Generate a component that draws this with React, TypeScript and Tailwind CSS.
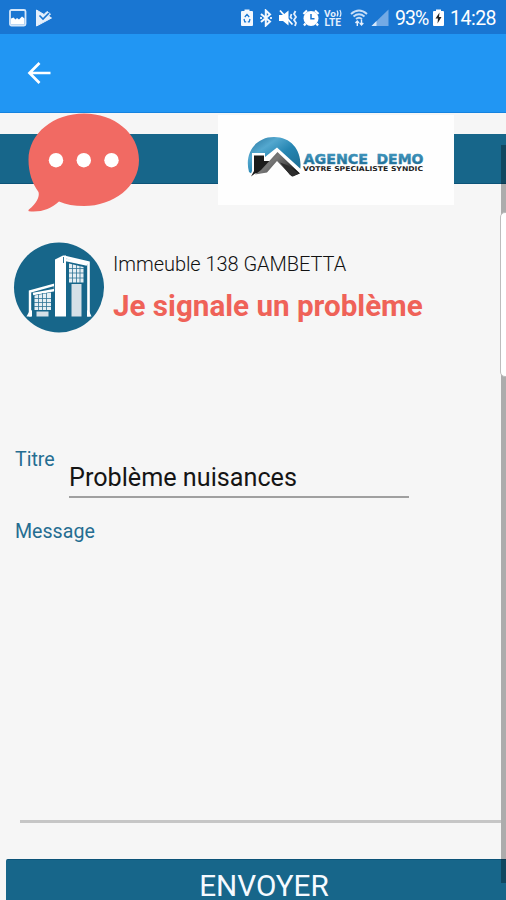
import { useState } from 'react';

const StatusBar = () => (
  <div className="flex h-[34px] shrink-0 items-center bg-[#1976d2] pl-[9px] pt-[2px] text-white">
    {/* Notifications */}
    <svg width="18" height="18" viewBox="0 0 18 18">
      <rect x="1" y="1" width="15.5" height="15.5" rx="1.5" fill="none" stroke="#d5e7fa" strokeWidth="1.8" />
      <path d="M2 9.5 L4.5 8.5 L6.5 10.5 L8 9 L10 10.5 L13 7.5 L15.5 9.5 V15.5 H2 Z" fill="#fff" />
    </svg>
    <svg className="ml-[8px]" width="18" height="18" viewBox="0 0 18 18">
      <path d="M1.5 1 L9 5.5 L12 2.5 L15.5 5 L13.5 7 L16.5 9 L1.5 17 Z" fill="#e4effc" stroke="#e4effc" strokeLinejoin="round" />
      <path d="M4.5 6.5 L8 10 L14 4" fill="none" stroke="#1976d2" strokeWidth="1.6" />
    </svg>

    {/* System icons */}
    <div className="ml-auto flex items-center pr-[9px]">
      <svg width="14" height="18" viewBox="0 0 14 18">
        <path d="M4.5 0.5 H9.5 V2 H12 Q13 2 13 3 V16 Q13 17 12 17 H2 Q1 17 1 16 V3 Q1 2 2 2 H4.5 Z" fill="#f3f8fe" />
        <path d="M4.8 8 L7 5.4 L9.2 8 M4 10 L4.8 12.8 H6.2 M10 10 L9.2 12.8 H7.8" fill="none" stroke="#1976d2" strokeWidth="1.3" />
      </svg>
      <svg className="ml-[5px]" width="14" height="18" viewBox="0 0 14 18">
        <path d="M2 5 L11 12.5 L6.8 16.5 V1.5 L11 5.5 L2 13" fill="none" stroke="#f3f8fe" strokeWidth="2" />
        <path d="M1 9 H3 M11 9 H13" stroke="#d5e7fa" strokeWidth="1.8" />
      </svg>
      <svg className="ml-[5px]" width="20" height="18" viewBox="0 0 20 18">
        <path d="M1 6 H5 L10.5 1.5 V16.5 L5 12 H1 Z" fill="#fff" />
        <path d="M2 1.5 L14.5 15.5" stroke="#fff" strokeWidth="1.8" />
        <path d="M13.5 5 L12.5 8 L14 10 M17.5 2 L16 5 L18 8 L16 11 L18 14 L17 17" fill="none" stroke="#e4effc" strokeWidth="1.8" />
      </svg>
      <svg className="ml-[4px]" width="18" height="18" viewBox="0 0 18 18">
        <circle cx="9" cy="9.5" r="7.5" fill="#fff" />
        <path d="M1.5 5 L5 1.5 M16.5 5 L13 1.5 M3.5 14.5 L2 16.5 M14.5 14.5 L16 16.5" stroke="#fff" strokeWidth="2.2" />
        <path d="M9 5 V9.7 H12.5" fill="none" stroke="#1976d2" strokeWidth="1.5" />
      </svg>
      <svg className="ml-[4px] overflow-visible" width="19" height="18" viewBox="0 0 19 18" fill="#e4effc" fontFamily="Roboto, sans-serif" fontWeight="700">
        <text x="0" y="7.5" fontSize="9" textLength="12" lengthAdjust="spacingAndGlyphs">Vo</text>
        <path d="M13 1.5 Q15 4.5 13 7.5 M15.8 1 Q18 4.5 15.8 8" fill="none" stroke="#e4effc" strokeWidth="1.2" />
        <text x="0.5" y="17" fontSize="10" textLength="16.5" lengthAdjust="spacingAndGlyphs">LTE</text>
      </svg>
      <svg className="ml-[7px]" width="18" height="18" viewBox="0 0 18 18">
        <path d="M1 5 Q9 -2 17 5 M3.5 7.5 Q9 3 14.5 7.5 M6 10 Q9 7.5 12 10" fill="none" stroke="#c9dff7" strokeWidth="1.9" />
        <path d="M7.3 17 V12.5 M5.5 14 L7.3 12 L9 14 M11.5 10.5 V15.5 M9.8 14 L11.5 16 L13.3 14" fill="none" stroke="#e4effc" strokeWidth="1.4" />
      </svg>
      <svg className="ml-[3px]" width="18" height="18" viewBox="0 0 18 18">
        <path d="M17.5 0.5 V17 H0.5 Z" fill="#73aae5" />
        <path d="M5.5 12 V17 H0.5 Z" fill="#d5e7fa" />
      </svg>
      <span className="ml-[6px] w-[34px] whitespace-nowrap pt-[2px] text-[19.5px] leading-[20px] tracking-[-1px]">93%</span>
      <svg className="ml-[3px]" width="13" height="18" viewBox="0 0 13 18">
        <path d="M4 0.5 H9 V2 H11 Q12 2 12 3 V16 Q12 17 11 17 H2 Q1 17 1 16 V3 Q1 2 2 2 H4 Z" fill="#fff" />
        <path d="M7.5 3.5 L3.5 9.5 H6 L5.5 14.5 L9.5 8 H7 Z" fill="#222" />
      </svg>
      <span className="ml-[5px] w-[47px] whitespace-nowrap pt-[2px] text-[19.5px] leading-[20px] tracking-[-0.5px]">14:28</span>
    </div>
  </div>
);

const AppBar = () => (
  <div className="flex h-[79px] shrink-0 items-center border-b border-[#1583e0] bg-[#2196f3] pl-[27px]">
    <button aria-label="Retour">
      <svg width="25" height="24" viewBox="0 0 25 24" fill="none" stroke="#fff" strokeWidth="2.7">
        <path d="M23.5 12 H3 M12.5 2 L2.5 12 L12.5 22" />
      </svg>
    </button>
  </div>
);

const ChatBubble = () => (
  <svg className="absolute left-[27px] top-0" width="114" height="100" viewBox="0 0 114 100">
    <path
      d="M57 0.5 C87 0.5 112 20 112 47 C112 74 86 93 57 93 C47 93 39 91.5 32 88.5 C24 96 14 99.5 2 98.3 C1 98 1.4 97 2.2 96.3 C9 91 13 84 11.5 79 C5 70 1.5 59 1.5 47 C1.5 20 27 0.5 57 0.5 Z"
      fill="#f16a63"
    />
    <g fill="#fff">
      <circle cx="29" cy="47.2" r="7.2" />
      <circle cx="56.8" cy="47.2" r="7.2" />
      <circle cx="84.5" cy="47.2" r="7.2" />
    </g>
  </svg>
);

const AgencyLogo = () => (
  <div className="absolute left-[218px] top-[2px] h-[90px] w-[236px] bg-[#fefefe]">
    <svg width="236" height="90" viewBox="0 0 236 90">
      <defs>
        <linearGradient id="sky" x1="0" y1="0" x2="1" y2="1">
          <stop offset="0" stopColor="#226f99" />
          <stop offset="0.3" stopColor="#54a8cf" />
          <stop offset="0.55" stopColor="#2585b2" />
          <stop offset="1" stopColor="#1c688c" />
        </linearGradient>
        <linearGradient id="roof" x1="0" y1="0" x2="1" y2="0.6">
          <stop offset="0" stopColor="#444" />
          <stop offset="0.45" stopColor="#777" />
          <stop offset="0.7" stopColor="#555" />
          <stop offset="1" stopColor="#111" />
        </linearGradient>
        <linearGradient id="letters" x1="0" y1="0" x2="0" y2="1">
          <stop offset="0" stopColor="#4aa5cc" />
          <stop offset="1" stopColor="#155d84" />
        </linearGradient>
      </defs>
      <path d="M31 57 C26 39 37 22 56 22 C75 22 85 38 82 56 L59 38 L34 59 Z" fill="url(#sky)" />
      <path d="M32 61 L34 56 V38 H47 V42 L59 32.5 L86 57 L81 63 H70 L59 49 L49 60 Z" fill="#fff" />
      <path d="M36 40.5 H46 V46 L52 46 L43 58 L37 58.5 L33 61.5 L36 56 Z" fill="#1b1b1b" />
      <path d="M43 55 L59.5 37 L82 58.5 L74 61.5 L59 46 L49 57.5 L37 59.5 Z" fill="url(#roof)" />
      <path d="M62 47.5 L70 50.5 L81 58.5 L75 61.5 L72 60 Z" fill="#2d2d2d" />
      <g fontFamily="'DejaVu Sans', sans-serif" fontWeight="700">
        <g fontSize="14.3" fill="url(#letters)" stroke="#3689b2" strokeWidth="0.5">
          <text x="85.5" y="49" textLength="64.5" lengthAdjust="spacingAndGlyphs">AGENCE</text>
          <text x="158.5" y="49" textLength="47" lengthAdjust="spacingAndGlyphs">DEMO</text>
        </g>
        <text x="85" y="56.2" fontSize="6.6" textLength="120" lengthAdjust="spacingAndGlyphs" fill="#222">
          VOTRE SPECIALISTE SYNDIC
        </text>
      </g>
    </svg>
  </div>
);

const BuildingIcon = () => (
  <svg width="92" height="92" viewBox="0 0 92 92">
    <circle cx="46" cy="45.5" r="45" fill="#17668a" />
    {/* Tower */}
    <path d="M42 74.5 V17.5 L50 13.5 H53 V74.5 Z" fill="#fff" />
    <path d="M52 15 L75.5 20.5 V74.5 M53 18 L74 22.5" fill="none" stroke="#fff" strokeWidth="2.6" />
    <path d="M74 68 V74.5 H78.5 L76.5 70 Z" fill="#fff" />
    <path d="M50.5 15 V21" stroke="#17668a" strokeWidth="0.9" />
    {/* Low block */}
    <path d="M17 74.5 V49.5 L42 42.5 V48 L20 52" fill="none" stroke="#fff" strokeWidth="2.4" />
    <path d="M19 68 V74.5 H13.5 L16 70 Z" fill="#fff" />
    <path d="M41.5 40 V52" stroke="#17668a" strokeWidth="0.9" />
    {/* Windows */}
    <path d="M56 21.5 L70.5 25 V40.5 H56 Z M21.5 53.5 L38 50.5 V68 H21.5 Z" fill="#e6eff4" />
    <path
      d="M59.5 22 V41 M63.5 23 V41 M67 24 V41 M56 26.5 H71 M56 31 H71 M56 36 H71 M25.5 52 V68 M29.5 51 V68 M33.5 51 V68 M21 56.5 H38 M21 60.5 H38 M21 64.5 H38"
      stroke="#2f7395"
      strokeWidth="0.8"
    />
    <path d="M58.5 42 H68.5 V74.5 H58.5 Z M23.5 69.5 H35.5 V74.5 H23.5 Z" fill="#d5e0e7" />
  </svg>
);

const Scrollbar = () => (
  <div className="absolute right-0 top-[145px] h-[738px] w-[5px] bg-black/30">
    <div className="absolute left-[-1px] top-[67px] h-[165px] w-[12px] rounded-[5px] border border-[#bdbdbd] bg-white" />
  </div>
);

const App = () => {
  const [title, setTitle] = useState('Problème nuisances');
  const [message, setMessage] = useState('');

  return (
    <div className="relative flex h-[900px] w-[506px] flex-col overflow-hidden bg-[#f6f6f6] font-['Roboto',sans-serif]">
      <StatusBar />
      <AppBar />

      <div className="relative h-[129px] shrink-0 pt-[21px]">
        <div className="h-[50px] border-b border-[#0c5378] bg-[#17668a]" />
        <ChatBubble />
        <AgencyLogo />
      </div>

      <div className="flex h-[206px] shrink-0 pl-[13px]">
        <BuildingIcon />
        <div className="pl-[8px] pt-[9px]">
          <p className="whitespace-nowrap text-[20px] font-light leading-[26px] tracking-[-0.05px] text-[#111]">Immeuble 138 GAMBETTA</p>
          <h1 className="mt-[12px] whitespace-nowrap text-[29.6px] font-bold leading-[34px] text-[#ef6258]">Je signale un problème</h1>
        </div>
      </div>

      <form className="flex h-[452px] shrink-0 flex-col">
        <div className="flex h-[50px] shrink-0 pl-[15px]">
          <label htmlFor="titre" className="w-[54px] text-[19.6px] leading-[24px] text-[#256d91]">Titre</label>
          <input
            id="titre"
            value={title}
            onChange={(e) => setTitle(e.target.value)}
            className="h-[50px] w-[340px] border-b-2 border-[#a0a0a0] pt-[10px] text-[25.2px] leading-[30px] text-[#151515] outline-none"
          />
        </div>
        <label htmlFor="message" className="mt-[22px] h-[24px] shrink-0 pl-[15px] text-[19.6px] leading-[24px] text-[#256d91]">Message</label>
        <textarea
          id="message"
          value={message}
          onChange={(e) => setMessage(e.target.value)}
          className="ml-[20px] mr-[5px] h-[279px] shrink-0 resize-none border-b-[3px] border-[#c6c6c6] outline-none"
        />
        {/* Wider than the screen, cut off on the right and at the bottom */}
        <button type="button" className="ml-[6px] mt-[36px] h-[53px] w-[516px] shrink-0 rounded-tl-[2px] border-t border-[#0c5378] bg-[#17668a] text-[29.7px] leading-[50px] text-[#f5faff]">
          ENVOYER
        </button>
      </form>

      <Scrollbar />
    </div>
  );
};

export default App;
